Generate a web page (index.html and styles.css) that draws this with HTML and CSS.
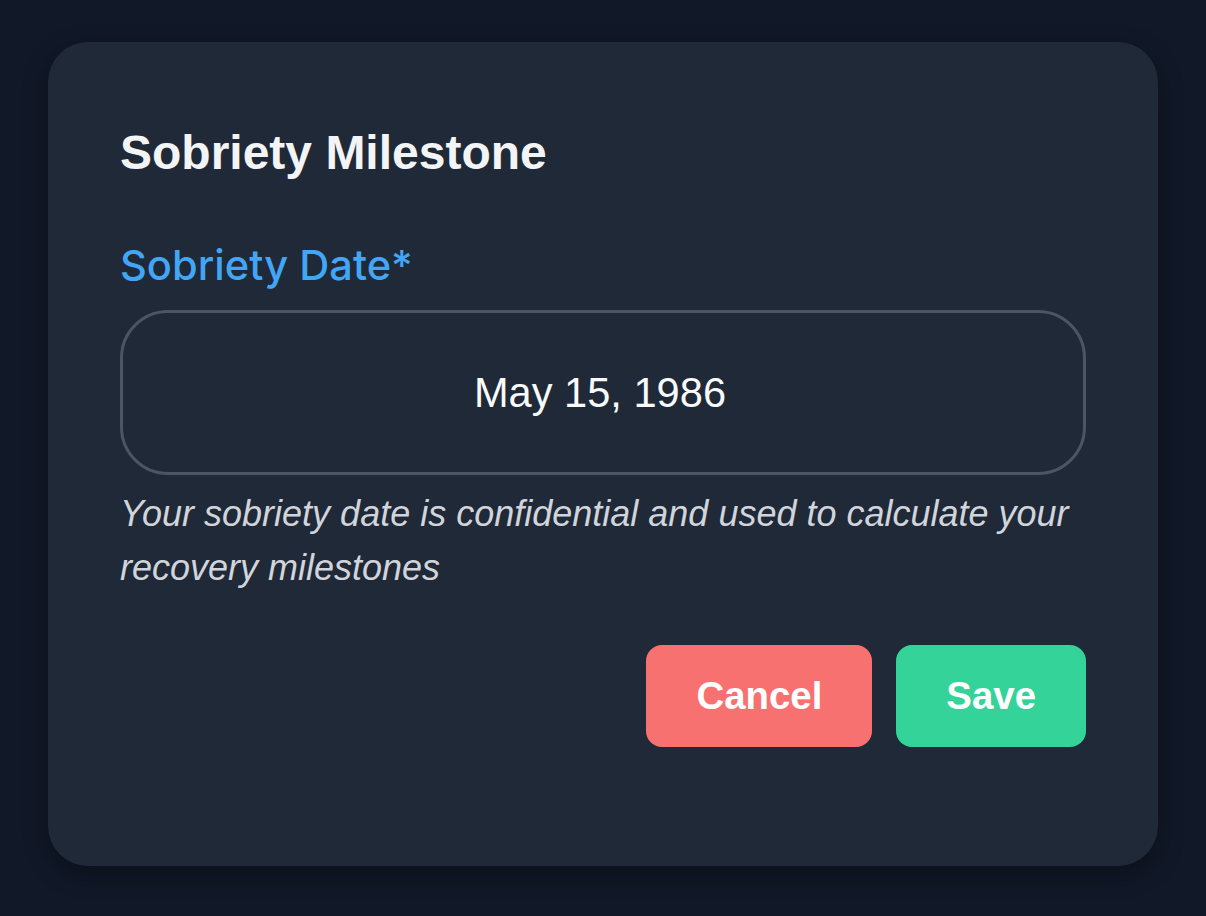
FILE: index.html
```html
<!DOCTYPE html>
<html lang="en">
<head>
<meta charset="utf-8">
<title>Sobriety Milestone</title>
<link rel="stylesheet" href="styles.css">
</head>
<body>
  <div class="card">
    <h2 class="title">Sobriety Milestone</h2>
    <label class="label">Sobriety Date*</label>
    <div class="date-input">May 15, 1986</div>
    <p class="helper">Your sobriety date is confidential and used to calculate your recovery milestones</p>
    <div class="actions">
      <button class="btn btn-cancel">Cancel</button>
      <button class="btn btn-save">Save</button>
    </div>
  </div>
</body>
</html>
```

FILE: styles.css
```css
html, body {
  margin: 0;
  padding: 0;
  background: #111827;
}
body {
  padding: 42px 48px 50px;
  font-family: "Liberation Sans", Arial, sans-serif;
}
.card {
  box-sizing: border-box;
  height: 824px;
  background: #1f2937;
  border-radius: 40px;
  padding: 84px 72px 0;
  display: flex;
  flex-direction: column;
  box-shadow: 0 8px 24px rgba(0, 0, 0, 0.35);
}
.title {
  margin: 0;
  font-size: 48px;
  font-weight: 700;
  line-height: 54px;
  color: #f3f4f6;
}
.label {
  margin-top: 61px;
  font-family: Inter, "Noto Sans", sans-serif;
  font-size: 41.6px;
  font-weight: 500;
  line-height: 48px;
  color: #42a5f5;
}
.date-input {
  box-sizing: border-box;
  margin-top: 21px;
  height: 165px;
  border: 3px solid #4b5563;
  border-radius: 48px;
  display: flex;
  align-items: center;
  justify-content: center;
  padding-right: 6px;
  font-size: 41.6px;
  color: #f9fafb;
}
.helper {
  margin: 12px 0 0;
  font-size: 36px;
  font-style: italic;
  line-height: 54px;
  color: #d1d5db;
}
.actions {
  margin-top: 50px;
  display: flex;
  justify-content: flex-end;
  gap: 24px;
}
.btn {
  border: none;
  border-radius: 16px;
  padding: 30px 50px;
  font-family: "Liberation Sans", Arial, sans-serif;
  font-size: 38.4px;
  font-weight: 700;
  line-height: 42px;
  color: #ffffff;
}
.btn-cancel {
  background: #f87171;
}
.btn-save {
  background: #34d399;
}
```
